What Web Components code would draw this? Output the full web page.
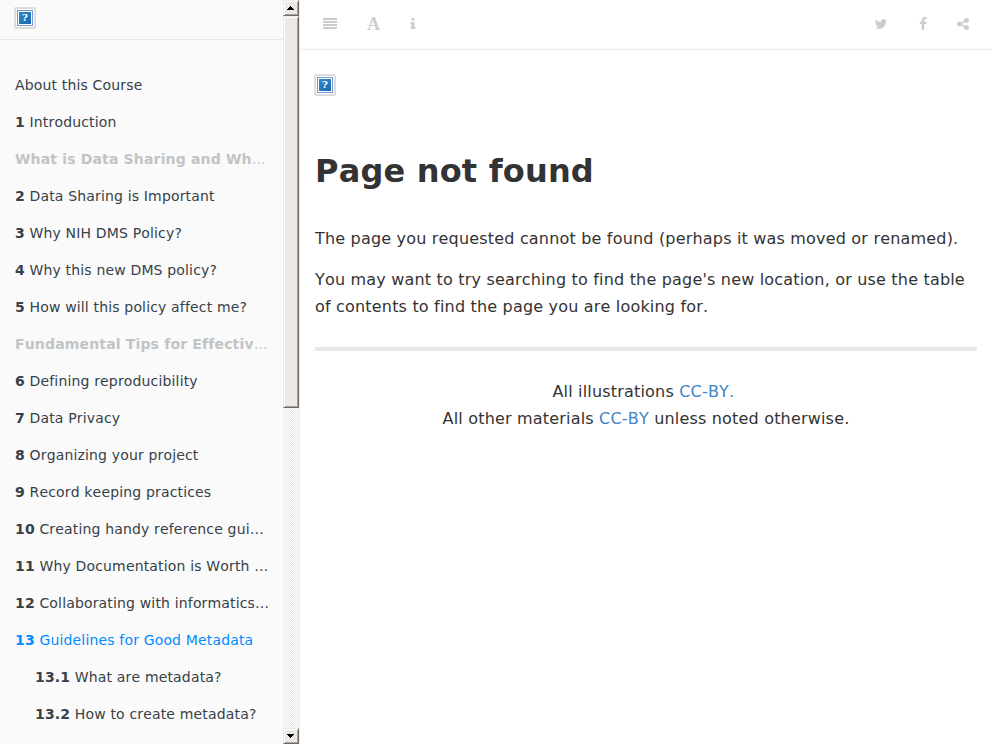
<!DOCTYPE html>
<html lang="en">
<head>
<meta charset="utf-8">
<title>Page not found</title>
<style>
html,body{margin:0;height:100%;overflow:hidden}
body{font-family:"DejaVu Sans",sans-serif;letter-spacing:.185px;font-kerning:none;color:#333;background:#fff}
</style>
</head>
<body>
<book-app></book-app>
<script>
function define(name, html, setup) {
  const t = document.createElement('template');
  t.innerHTML = html;
  customElements.define(name, class extends HTMLElement {
    constructor() {
      super();
      this.attachShadow({mode: 'open'}).appendChild(t.content.cloneNode(true));
    }
    connectedCallback() { if (setup) setup(this, this.shadowRoot); }
  });
}

define('missing-image', `
<style>
:host{display:block;box-sizing:border-box;width:22px;height:22px;border:2px solid #dcdcdc;border-radius:2px;background:#fff;padding:1px}
.frame{box-sizing:border-box;width:16px;height:16px;border:1px solid #7199cc;background:#fff}
.tile{width:12px;height:12px;margin:1px;background:linear-gradient(135deg,#3388c8,#1b69b0);color:#fff;
 font:bold 10px/12px "DejaVu Serif",serif;letter-spacing:0;text-align:center}
</style><div class="frame"><div class="tile">?</div></div>`);

const icons = {
  info: '<path d="M1216 1344v128q0 26-19 45t-45 19h-512q-26 0-45-19t-19-45v-128q0-26 19-45t45-19h64v-384h-64q-26 0-45-19t-19-45v-128q0-26 19-45t45-19h384q26 0 45 19t19 45v576h64q26 0 45 19t19 45zm-128-1152v192q0 26-19 45t-45 19h-256q-26 0-45-19t-19-45v-192q0-26 19-45t45-19h256q26 0 45 19t19 45z"/>',
  twitter: '<path d="M1684 408q-67 98-162 167 1 14 1 42 0 130-38 259.5t-115.5 248.5-184.5 210.5-258 146-323 54.5q-271 0-496-145 35 4 78 4 225 0 401-138-105-2-188-64.5t-114-159.5q33 5 61 5 43 0 85-11-112-23-185.5-111.5t-73.5-205.5v-4q68 38 146 41-66-44-105-115t-39-154q0-88 44-163 121 149 294.5 238.5t371.5 99.5q-8-38-8-74 0-134 94.5-228.5t228.5-94.5q140 0 236 102 109-21 205-78-37 115-142 178 93-10 186-50z"/>',
  facebook: '<path d="M1343 12v264h-157q-86 0-116 36t-30 108v189h293l-39 296h-254v759h-306v-759h-255v-296h255v-218q0-186 104-288.5t277-102.5q147 0 228 12z"/>',
  share: '<path d="M1344 1024q133 0 226.5 93.5t93.5 226.5-93.5 226.5-226.5 93.5-226.5-93.5-93.5-226.5q0-12 2-34l-360-180q-92 86-218 86-133 0-226.5-93.5t-93.5-226.5 93.5-226.5 226.5-93.5q126 0 218 86l360-180q-2-22-2-34 0-133 93.5-226.5t226.5-93.5 226.5 93.5 93.5 226.5-93.5 226.5-226.5 93.5q-126 0-218-86l-360 180q2 22 2 34t-2 34l360 180q92-86 218-86z"/>'
};
define('tool-icon', `
<style>
:host{display:block;width:14px;height:14px;color:#ccc}
svg{display:block;width:14px;height:14px;fill:currentColor}
:host([name=list]) svg{shape-rendering:crispEdges}
b{display:block;font:bold 18px/14px "Liberation Serif",serif;letter-spacing:0}
</style><span></span>`, (el, root) => {
  const n = el.getAttribute('name');
  root.querySelector('span').innerHTML = n === 'font' ? '<b>A</b>' :
    n === 'list' ? '<svg viewBox="0 0 14 14"><path d="M0 1h14v2H0zM0 4h14v2H0zM0 7h14v2H0zM0 10h14v2H0z"/></svg>' :
    `<svg viewBox="0 0 1792 1792">${icons[n]}</svg>`;
});

define('book-toolbar', `
<style>
:host{display:flex;justify-content:space-between;box-sizing:border-box;height:50px;border-bottom:1px solid #ececec;padding:17px 22px 0 23px}
div{display:flex}
.left{gap:30px}.right{gap:28px}
.left tool-icon:last-child{margin-left:-5.5px}
.right tool-icon:last-child{margin-left:-2px}
</style>
<div class="left"><tool-icon name="list"></tool-icon><tool-icon name="font"></tool-icon><tool-icon name="info"></tool-icon></div>
<div class="right"><tool-icon name="twitter"></tool-icon><tool-icon name="facebook"></tool-icon><tool-icon name="share"></tool-icon></div>`);

define('scroll-bar', `
<style>
:host{display:flex;flex-direction:column;box-sizing:border-box;width:16px;height:744px;
 background:repeating-conic-gradient(#fff 0 25%,#ebe8e4 0 50%) 0 0/2px 2px}
.box{box-sizing:border-box;border:1px solid;border-color:#edeae5 #6d6a67 #6d6a67 #edeae5;background:#edeae5;
 box-shadow:inset 1px 1px #fff,inset -1px -1px #a6a29e;flex:none}
.btn{height:16px;display:flex;align-items:center;justify-content:center}
.thumb{height:392px}
.space{flex:1}
svg{display:block;width:7px;height:4px;margin-right:1px;shape-rendering:crispEdges}
</style>
<div class="box btn"><svg viewBox="0 0 7 4"><path d="M3 0h1v1h1v1h1v1h1v1H0V3h1V2h1V1h1z"/></svg></div>
<div class="box thumb"></div><div class="space"></div>
<div class="box btn"><svg viewBox="0 0 7 4"><path d="M0 0h7v1H6v1H5v1H4v1H3V3H2V2H1V1H0z"/></svg></div>`);

define('toc-item', `
<style>
:host{display:block;box-sizing:border-box;height:37px;padding:10px 0 10px 15px;font-size:14px;line-height:17px;letter-spacing:.16px;color:#364149;
 white-space:nowrap}
:host([part-title]){color:#c1c4c6}
:host([active]){color:#008cff}
:host([sub]){padding-left:35px}
b:empty{display:none}
</style><b></b> <slot></slot>`, (el, root) => { root.querySelector('b').textContent = el.getAttribute('num') || ''; });

define('book-sidebar', `
<style>
:host{display:flex;box-sizing:border-box;width:300px;height:744px;background:#fafafa;border-right:1px solid #ececec}
.content{width:283px;height:744px;overflow:hidden}
.logo{box-sizing:border-box;height:40px;padding:7px 14px;border-bottom:1px solid #e8e8e8}
.list{padding-top:27px}
</style>
<div class="content"><div class="logo"><missing-image></missing-image></div><div class="list"><slot></slot></div></div>
<scroll-bar></scroll-bar>`);

define('book-page', `
<style>
:host{display:block;padding:24px 15px 0;font-size:16px;line-height:27.2px}
missing-image{margin-left:-1px}
h1{margin:47px 0 26px;font-size:32px;line-height:56px}
p{margin:0 0 13.6px}
hr{height:4px;border:0;margin:27.2px 0 26.2px;background:#e7e7e7}
.foot{text-align:center}
a{color:#4183c4;text-decoration:none}
</style>
<missing-image></missing-image>
<h1>Page not found</h1>
<p>The page you requested cannot be found (perhaps it was moved or renamed).</p>
<p>You may want to try searching to find the page's new location, or use the table of contents to find the page you are looking for.</p>
<hr>
<p class="foot">All illustrations <a>CC-BY.</a>&nbsp;<br>All other materials <a>CC-BY</a> unless noted otherwise.</p>`);

define('book-app', `
<style>
:host{display:flex;height:744px;width:992px;overflow:hidden}
main{flex:1;min-width:0}
</style>
<book-sidebar>
<toc-item>About this Course</toc-item>
<toc-item num="1">Introduction</toc-item>
<toc-item part-title><b>What is Data Sharing and Wh</b>…</toc-item>
<toc-item num="2">Data Sharing is Important</toc-item>
<toc-item num="3">Why NIH DMS Policy?</toc-item>
<toc-item num="4">Why this new DMS policy?</toc-item>
<toc-item num="5">How will this policy affect me?</toc-item>
<toc-item part-title><b>Fundamental Tips for Effectiv</b>…</toc-item>
<toc-item num="6">Defining reproducibility</toc-item>
<toc-item num="7">Data Privacy</toc-item>
<toc-item num="8">Organizing your project</toc-item>
<toc-item num="9">Record keeping practices</toc-item>
<toc-item num="10">Creating handy reference gui…</toc-item>
<toc-item num="11">Why Documentation is Worth …</toc-item>
<toc-item num="12">Collaborating with informatics…</toc-item>
<toc-item num="13" active>Guidelines for Good Metadata</toc-item>
<toc-item num="13.1" sub>What are metadata?</toc-item>
<toc-item num="13.2" sub>How to create metadata?</toc-item>
</book-sidebar>
<main><book-toolbar></book-toolbar><book-page></book-page></main>`);
</script>
</body>
</html>
